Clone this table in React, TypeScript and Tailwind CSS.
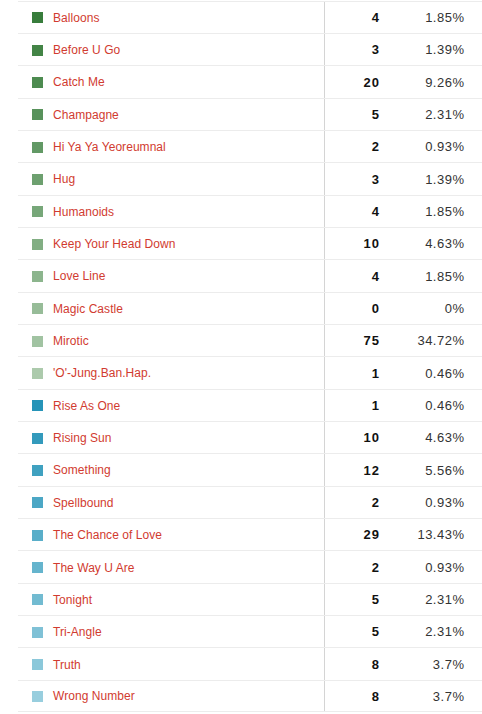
import React from "react";

const rows: [string, number, string][] = [
  ["Balloons", 4, "1.85%"],
  ["Before U Go", 3, "1.39%"],
  ["Catch Me", 20, "9.26%"],
  ["Champagne", 5, "2.31%"],
  ["Hi Ya Ya Yeoreumnal", 2, "0.93%"],
  ["Hug", 3, "1.39%"],
  ["Humanoids", 4, "1.85%"],
  ["Keep Your Head Down", 10, "4.63%"],
  ["Love Line", 4, "1.85%"],
  ["Magic Castle", 0, "0%"],
  ["Mirotic", 75, "34.72%"],
  ["'O'-Jung.Ban.Hap.", 1, "0.46%"],
  ["Rise As One", 1, "0.46%"],
  ["Rising Sun", 10, "4.63%"],
  ["Something", 12, "5.56%"],
  ["Spellbound", 2, "0.93%"],
  ["The Chance of Love", 29, "13.43%"],
  ["The Way U Are", 2, "0.93%"],
  ["Tonight", 5, "2.31%"],
  ["Tri-Angle", 5, "2.31%"],
  ["Truth", 8, "3.7%"],
  ["Wrong Number", 8, "3.7%"],
];

function lerp(a: number[], b: number[], t: number) {
  return `rgb(${a.map((v, i) => Math.round(v + (b[i] - v) * t)).join(",")})`;
}

function colorFor(i: number) {
  if (i < 12) return lerp([56, 125, 60], [172, 202, 172], i / 11);
  return lerp([38, 148, 184], [152, 206, 222], (i - 12) / 9);
}

export default function App() {
  return (
    <div
      className="w-[482px] h-[714px] bg-white overflow-hidden pt-[0.5px]"
      style={{ fontFamily: '"Liberation Sans", Arial, sans-serif' }}
    >
      <div className="ml-[18px]">
        {rows.map(([name, n, pct], i) => (
          <div
            key={name}
            className="flex h-[32.35px] border-t border-[#ececec] last:border-b"
          >
            <div className="w-[306px] flex items-center pl-[14px] pt-[1px]">
              <span
                className="w-[11px] h-[11px] mr-[10px] shrink-0"
                style={{ backgroundColor: colorFor(i) }}
              />
              <span className="text-[12px] text-[#d13b30] tracking-[0.05px]">{name}</span>
            </div>
            <div className="w-[66px] border-l border-[#d4d4d4] flex items-center justify-end pr-[10px] pt-[1px] text-[13px] font-bold text-[#111] tracking-[1px]">
              {n}
            </div>
            <div className="flex-1 flex items-center justify-end pr-[17.5px] pt-[1px] text-[13px] text-[#333] tracking-[0.5px]">
              {pct}
            </div>
          </div>
        ))}
      </div>
    </div>
  );
}
